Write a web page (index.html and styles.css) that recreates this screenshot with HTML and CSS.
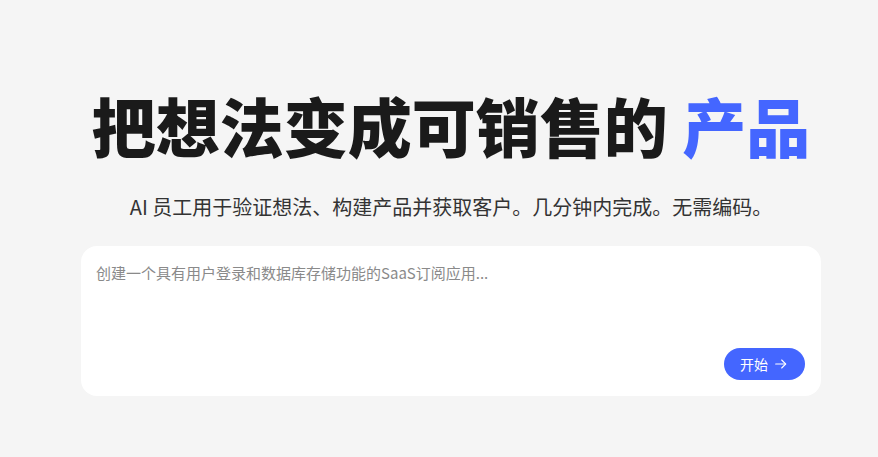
FILE: index.html
```html
<!DOCTYPE html>
<html lang="zh-CN">
<head>
    <meta charset="UTF-8">
    <meta name="viewport" content="width=device-width, initial-scale=1.0">
    <title>把想法变成可销售的产品</title>
    <link rel="stylesheet" href="styles.css">
</head>
<body>
    <main class="hero">
        <h1 class="title">把想法变成可销售的 <span class="accent">产品</span></h1>
        <p class="subtitle">AI 员工用于验证想法、构建产品并获取客户。几分钟内完成。无需编码。</p>
        <div class="prompt">
            <textarea class="prompt-input" placeholder="创建一个具有用户登录和数据库存储功能的SaaS订阅应用..."></textarea>
            <div class="prompt-actions">
                <button class="start">开始
                    <svg width="16" height="16" viewBox="0 0 24 24" fill="none" stroke="currentColor" stroke-width="1.6" stroke-linecap="round" stroke-linejoin="round"><path d="M4 12h15"/><path d="M13 6l6 6-6 6"/></svg>
                </button>
            </div>
        </div>
    </main>
</body>
</html>
```

FILE: styles.css
```css
body {
    margin: 0;
    background-color: #f5f5f5;
    font-family: "Noto Sans CJK SC", "Noto Sans", sans-serif;
    color: #1a1a1a;
}
.hero {
    display: flex;
    flex-direction: column;
    align-items: center;
    padding: 79px 57px 0 81px;
}
.title {
    margin: 0;
    font-size: 64px;
    font-weight: 900;
    line-height: 90px;
    color: #1a1a1a;
    white-space: nowrap;
}
.accent {
    color: #4466ff;
}
.subtitle {
    margin: 23px 0 0;
    font-size: 20px;
    line-height: 30px;
    color: #333;
}
.prompt {
    margin-top: 24px;
    width: 740px;
    height: 150px;
    box-sizing: border-box;
    background: #ffffff;
    border-radius: 16px;
    padding: 16px 16px 16px 15px;
    display: flex;
    flex-direction: column;
}
.prompt-input {
    flex: 1;
    border: none;
    outline: none;
    resize: none;
    background: transparent;
    font-family: inherit;
    font-size: 15px;
    line-height: 22px;
    color: #333;
    padding: 0;
}
.prompt-input::placeholder {
    color: #8a8a8a;
}
.prompt-actions {
    display: flex;
    justify-content: flex-end;
}
.start {
    display: flex;
    align-items: center;
    gap: 5px;
    height: 32px;
    padding: 0 16px;
    border: none;
    border-radius: 16px;
    background: #4466ff;
    color: #fff;
    font-family: inherit;
    font-size: 14px;
    cursor: pointer;
}
```
